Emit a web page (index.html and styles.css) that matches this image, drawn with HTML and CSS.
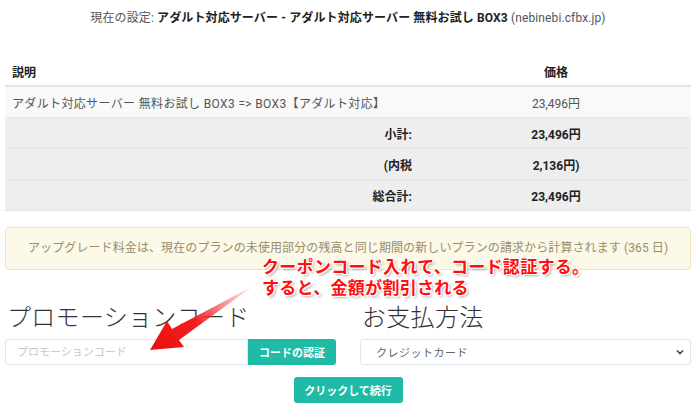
FILE: index.html
```html
<!DOCTYPE html>
<html lang="ja">
<head>
    <meta charset="UTF-8">
    <meta name="viewport" content="width=device-width, initial-scale=1.0">
    <title>アップグレード</title>
    <link rel="stylesheet" href="styles.css">
</head>
<body>
    <div class="page">
        <p class="current">現在の設定: <strong>アダルト対応サーバー - アダルト対応サーバー 無料お試し BOX3</strong> (nebinebi.cfbx.jp)</p>

        <!-- Order summary -->
        <table class="summary">
            <thead>
                <tr>
                    <th class="desc">説明</th>
                    <th class="price">価格</th>
                </tr>
            </thead>
            <tbody>
                <tr class="item">
                    <td class="desc">アダルト対応サーバー 無料お試し BOX3 =&gt; BOX3【アダルト対応】</td>
                    <td class="price">23,496円</td>
                </tr>
                <tr class="total">
                    <td class="label">小計:</td>
                    <td class="price">23,496円</td>
                </tr>
                <tr class="total">
                    <td class="label">(内税</td>
                    <td class="price">2,136円)</td>
                </tr>
                <tr class="total">
                    <td class="label">総合計:</td>
                    <td class="price">23,496円</td>
                </tr>
            </tbody>
        </table>

        <div class="alert">アップグレード料金は、現在のプランの未使用部分の残高と同じ期間の新しいプランの請求から計算されます (365 日)</div>

        <div class="columns">
            <div class="col">
                <h2>プロモーションコード</h2>
                <div class="input-group">
                    <input type="text" class="field" placeholder="プロモーションコード">
                    <button class="btn btn-addon">コードの認証</button>
                </div>
            </div>
            <div class="col">
                <h2>お支払方法</h2>
                <div class="field select">
                    <span>クレジットカード</span>
                    <svg width="10" height="10" viewBox="0 0 10 10"><path d="M2 3.5 L5 6.5 L8 3.5" fill="none" stroke="#444" stroke-width="1.6"/></svg>
                </div>
            </div>
        </div>

        <div class="actions">
            <button class="btn">クリックして続行</button>
        </div>

        <!-- Annotation overlay -->
        <svg class="arrow" width="120" height="80" viewBox="140 280 120 80">
            <defs>
                <linearGradient id="arrowFade" x1="150" y1="350" x2="252" y2="287" gradientUnits="userSpaceOnUse">
                    <stop offset="0" stop-color="#ee0d0d"/>
                    <stop offset="0.45" stop-color="#f02020"/>
                    <stop offset="1" stop-color="#f46a6a" stop-opacity="0.15"/>
                </linearGradient>
            </defs>
            <path d="M150,350 L167,321 L172,329 L253,286 L179,340 L184,347 Z" fill="url(#arrowFade)"/>
        </svg>
        <div class="note">
            クーポンコード入れて、コード認証する。<br>
            すると、金額が割引される
        </div>
    </div>
</body>
</html>
```

FILE: styles.css
```css
:root {
    --teal: #1fbba6;
    --border: #dbe6ed;
    --text: #333333;
    --muted: #555555;
}

body {
    margin: 0;
    font-family: Roboto, "Noto Sans CJK JP", sans-serif;
    font-size: 12px;
    color: var(--text);
    background: #ffffff;
}

.page {
    position: relative;
    width: 686px;
    padding: 8px 7px 0 5px;
}

.current {
    margin: 0;
    text-align: center;
    line-height: 20px;
    font-size: 12px;
    letter-spacing: 0.12px;
    color: var(--muted);
}

.current strong {
    color: #222222;
}

/* Order summary table */
.summary {
    width: 100%;
    margin-top: 29px;
    border-collapse: collapse;
}

.summary th {
    height: 28px;
    padding: 0;
    font-weight: bold;
    border-bottom: 2px solid #e4e4e4;
    color: #222222;
}

.summary th.desc {
    text-align: left;
    padding-left: 7px;
}

.summary td {
    height: 30px;
    padding: 0;
    border-bottom: 1px solid var(--border);
}

.summary .price {
    width: 270px;
    text-align: center;
}

.item td {
    background: #f9f9f9;
    color: #555555;
}

.item td.desc {
    padding-left: 7px;
    letter-spacing: 0.35px;
}

.total td {
    background: #eeeeee;
    font-weight: bold;
    color: #222222;
}

.total td.label {
    text-align: right;
    padding-right: 9px;
}

.alert {
    margin-top: 16px;
    height: 41px;
    line-height: 41px;
    padding-left: 22px;
    background: #fdf9e8;
    border: 1px solid #eee5bd;
    border-radius: 4px;
    color: #9a8c6a;
    letter-spacing: 0.1px;
}

/* Promotion / payment columns */
.columns {
    display: grid;
    grid-template-columns: 331px 331px;
    gap: 24px;
    margin-top: 33px;
}

.col h2 {
    margin: 0 0 6px 2px;
    font-size: 24px;
    font-weight: 300;
    line-height: 30px;
    letter-spacing: 0.3px;
    color: #333333;
}

.input-group {
    display: flex;
}

.field {
    box-sizing: border-box;
    height: 26px;
    border: 1px solid var(--border);
    border-radius: 3px;
    font-family: inherit;
    font-size: 11px;
    background: #ffffff;
}

.input-group .field {
    width: 243px;
    padding-left: 11px;
    border-radius: 3px 0 0 3px;
    outline: none;
}

.input-group .field::placeholder {
    color: #c8c8c8;
}

.btn {
    height: 26px;
    border: none;
    border-radius: 3px;
    background: var(--teal);
    color: #ffffff;
    font-family: inherit;
    font-size: 11px;
    font-weight: bold;
    cursor: pointer;
}

.btn-addon {
    width: 88px;
    border-radius: 0 3px 3px 0;
}

.select {
    display: flex;
    align-items: center;
    justify-content: space-between;
    padding: 0 5px 0 15px;
    color: #666666;
    letter-spacing: 0.5px;
}

.actions {
    display: flex;
    justify-content: center;
    margin-top: 12px;
}

.actions .btn {
    width: 109px;
}

/* Screenshot annotation */
.arrow {
    position: absolute;
    left: 140px;
    top: 280px;
}

.note {
    position: absolute;
    left: 262px;
    top: 257px;
    font-size: 17px;
    font-weight: bold;
    line-height: 21px;
    letter-spacing: 0.3px;
    color: #ff1010;
    text-shadow:
        1px 1px 0 #fff, -1px -1px 0 #fff, 1px -1px 0 #fff, -1px 1px 0 #fff,
        2px 2px 3px rgba(0, 0, 0, 0.35);
}
```
